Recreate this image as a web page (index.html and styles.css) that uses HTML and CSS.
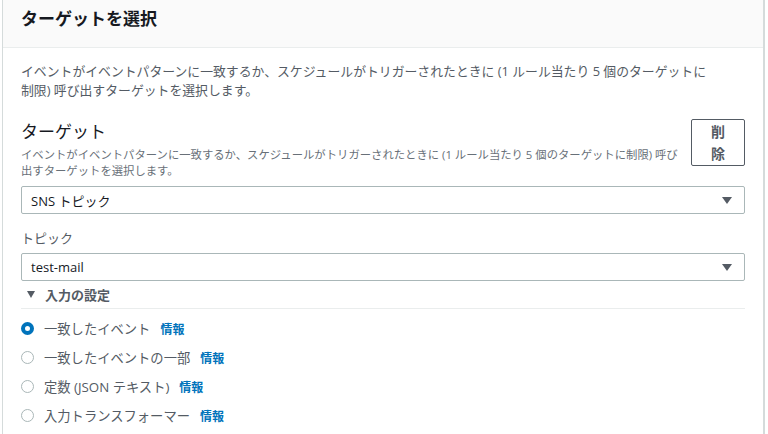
FILE: index.html
```html
<!DOCTYPE html>
<html lang="ja">
<head>
<meta charset="utf-8">
<link rel="stylesheet" href="styles.css">
</head>
<body>
<div class="card">
  <div class="card-header">
    <h2 class="title">ターゲットを選択</h2>
  </div>
  <div class="card-body">
    <p class="intro">イベントがイベントパターンに一致するか、スケジュールがトリガーされたときに (1 ルール当たり 5 個のターゲットに制限) 呼び出すターゲットを選択します。</p>
    <div class="target-row">
      <div class="target-text">
        <div class="target-label">ターゲット</div>
        <div class="target-desc">イベントがイベントパターンに一致するか、スケジュールがトリガーされたときに (1 ルール当たり 5 個のターゲットに制限) 呼び出すターゲットを選択します。</div>
      </div>
      <button class="delete-btn">削<br>除</button>
    </div>
    <div class="select first-select">
      <span>SNS トピック</span>
      <span class="caret"></span>
    </div>
    <div class="field-label">トピック</div>
    <div class="select">
      <span>test-mail</span>
      <span class="caret"></span>
    </div>
    <div class="expander">
      <span class="exp-caret"></span>
      <span>入力の設定</span>
    </div>
    <div class="divider"></div>
    <div class="radios">
      <div class="radio-row"><span class="radio checked"></span><span class="radio-label">一致したイベント</span><a class="info">情報</a></div>
      <div class="radio-row"><span class="radio"></span><span class="radio-label">一致したイベントの一部</span><a class="info">情報</a></div>
      <div class="radio-row"><span class="radio"></span><span class="radio-label">定数 (JSON テキスト)</span><a class="info">情報</a></div>
      <div class="radio-row"><span class="radio"></span><span class="radio-label">入力トランスフォーマー</span><a class="info">情報</a></div>
    </div>
  </div>
</div>
</body>
</html>
```
FILE: styles.css
```css
* { box-sizing: border-box; }
html, body { margin: 0; padding: 0; background: #ffffff; }
body {
  font-family: "Open Sans", "Noto Sans CJK JP", sans-serif;
  color: #16191f;
  overflow: hidden;
  height: 434px;
}
.card {
  margin: 0 3px 0 2px;
  border-left: 1px solid #d5dbdb;
  border-right: 2px solid #d5dbdb;
  min-height: 434px;
  background: #fff;
}
.card-header {
  background: #fafafa;
  border-bottom: 1px solid #eaeded;
  padding: 7px 18px 16px;
  height: 48px;
}
.title {
  margin: 0;
  font-size: 17px;
  line-height: 24px;
  font-weight: 700;
  color: #16191f;
}
.card-body {
  padding: 14px 18px 0 18px;
}
.intro {
  margin: 0;
  font-size: 12.85px;
  line-height: 19px;
  color: #545b64;
  max-width: 690px;
}
.target-row {
  display: flex;
  align-items: flex-start;
  gap: 8px;
  margin-top: 19px;
}
.target-text { flex: 1; padding-top: 2px; }
.target-label {
  font-size: 17px;
  line-height: 22px;
  color: #16191f;
}
.target-desc {
  margin-top: 4px;
  font-size: 11.35px;
  line-height: 16px;
  color: #687078;
}
.delete-btn {
  flex: none;
  width: 54px;
  height: 47px;
  border: 1px solid #545b64;
  border-radius: 2px;
  background: #fff;
  font-family: inherit;
  font-weight: 700;
  font-size: 14px;
  line-height: 22px;
  color: #545b64;
  padding: 0;
}
.select {
  display: flex;
  align-items: center;
  justify-content: space-between;
  height: 28px;
  border: 1px solid #aab7b8;
  border-radius: 2px;
  padding: 0 12px 0 9px;
  font-size: 13px;
  color: #16191f;
  margin-top: 5px;
}
.first-select { margin-top: 7px; }
.caret {
  width: 0; height: 0;
  border-left: 5px solid transparent;
  border-right: 5px solid transparent;
  border-top: 7px solid #545b64;
}
.field-label {
  margin-top: 14px;
  font-size: 13px;
  line-height: 20px;
  color: #545b64;
}
.expander {
  display: flex;
  align-items: center;
  margin-top: 4px;
  height: 18px;
  font-size: 13px;
  font-weight: 700;
  color: #545b64;
  padding-left: 6px;
}
.exp-caret {
  width: 0; height: 0;
  border-left: 4px solid transparent;
  border-right: 4px solid transparent;
  border-top: 7px solid #545b64;
  margin-right: 10px;
}
.divider {
  margin-top: 5px;
  height: 1px;
  background: #eaeded;
}
.radios { padding-top: 5px; }
.radio-row {
  display: flex;
  align-items: center;
  height: 29px;
}
.radio {
  width: 13px;
  height: 13px;
  border-radius: 50%;
  border: 1px solid #aab7b8;
  background: #fff;
  flex: none;
  margin-right: 10px;
}
.radio.checked { border: 4px solid #0073bb; }
.radio-label {
  font-size: 13.3px;
  color: #545b64;
}
.info {
  margin-left: 10px;
  font-size: 12px;
  font-weight: 700;
  color: #0073bb;
}
```
